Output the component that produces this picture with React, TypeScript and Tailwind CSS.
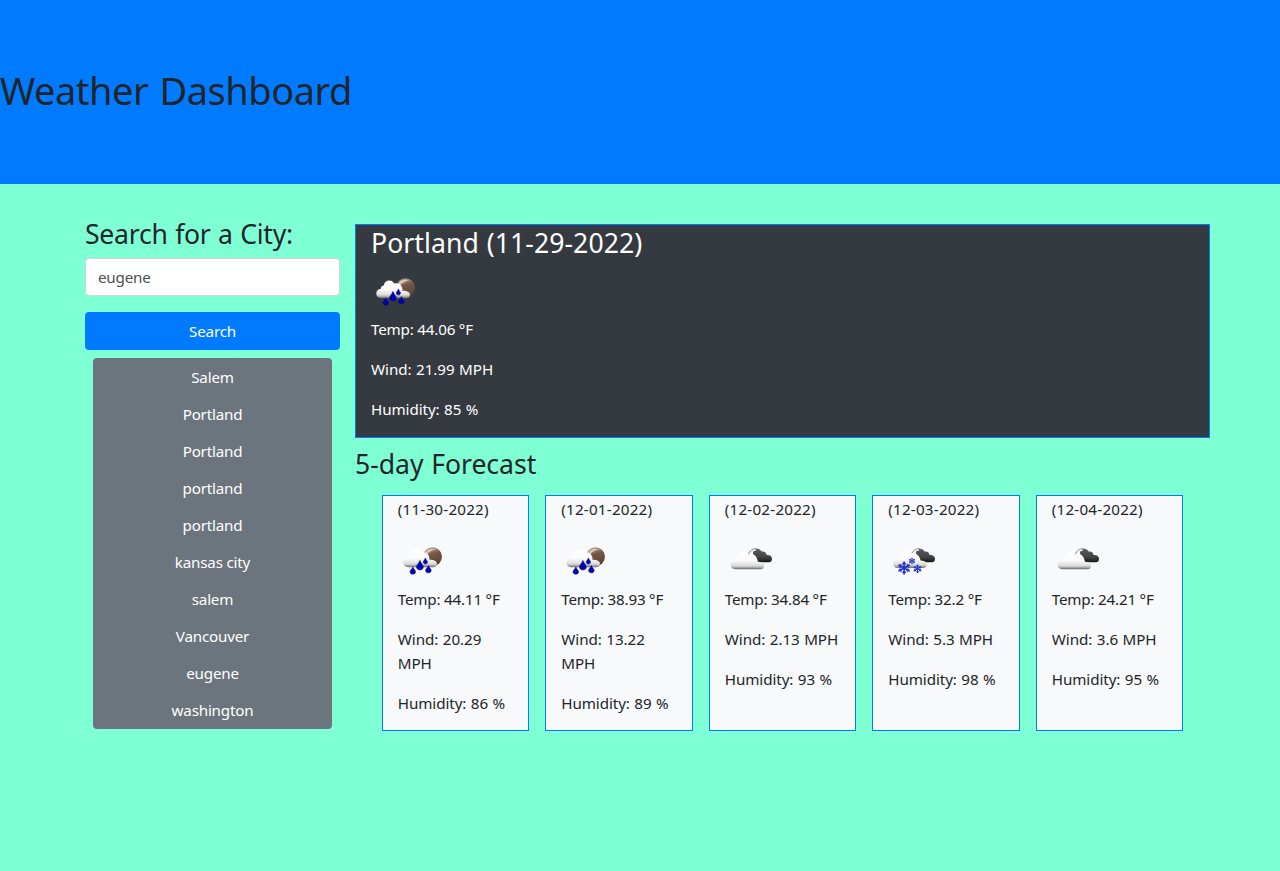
import React, { useId } from "react";

type Kind = "rain" | "clouds" | "snow";

const CLOUD =
  "M10 32.5C7 32.5 5 30.5 5 27.8C5 25.2 6.8 23.3 9.6 22.9C9.2 21.2 10.8 19.6 12.6 19.4C13 16.4 15.2 14.8 18 14.8C20.2 14.8 21.8 15.9 22.8 17.8C26 16.6 29.6 18.2 30.8 21.6C31.3 23 31.4 24.2 31.2 25.2C33 24.6 36.4 25.2 38 27C39.6 29.4 38 32.5 35 32.5Z";

const DARK_CLOUD =
  "M28 18C27.6 14.6 30 12.6 33 13C34.6 13.2 36 14.2 36.6 15.6C39 14.8 41.4 16.4 41.6 19C44.6 18.6 47 20 47 22.8C47 25 46 26.2 44 26.2H33C32.4 22.6 31 19.6 28 18Z";

function Drop({ x, y, h, w }: { x: number; y: number; h: number; w: number }) {
  return (
    <path
      d={`M${x} ${y}C${x + w * 0.2} ${y + h * 0.35} ${x + w / 2} ${y + h * 0.48} ${x + w / 2} ${y + h * 0.68}C${x + w / 2} ${y + h * 1.1} ${x - w / 2} ${y + h * 1.1} ${x - w / 2} ${y + h * 0.68}C${x - w / 2} ${y + h * 0.48} ${x - w * 0.2} ${y + h * 0.35} ${x} ${y}Z`}
      fill="#0000b4"
      stroke="#00006e"
      strokeWidth="0.5"
    />
  );
}

function Flake({ x, y, r }: { x: number; y: number; r: number }) {
  return (
    <g transform={`translate(${x} ${y}) scale(${r / 6})`} stroke="#2733c8" strokeWidth="1.5" fill="none">
      {[0, 60, 120, 180, 240, 300].map((a) => (
        <path key={a} transform={`rotate(${a})`} d="M0 0V-6.2M-1.4 -4.8L0 -3L1.4 -4.8" />
      ))}
    </g>
  );
}

function WeatherIcon({ kind }: { kind: Kind }) {
  const id = useId();
  return (
    <svg viewBox="0 0 50 50" className="block size-[50px]" aria-hidden="true">
      <defs>
        <linearGradient id={`${id}w`} x1="0" y1="0" x2="0" y2="1">
          <stop offset="0" stopColor="#ffffff" />
          <stop offset="0.5" stopColor="#fbfbfb" />
          <stop offset="0.8" stopColor="#dcdcdc" />
          <stop offset="0.88" stopColor="#b8b8b8" />
          <stop offset="1" stopColor="#666666" />
        </linearGradient>
        <linearGradient id={`${id}m`} x1="0" y1="0" x2="0.3" y2="1">
          <stop offset="0" stopColor="#b79a86" />
          <stop offset="0.25" stopColor="#a58a78" />
          <stop offset="0.45" stopColor="#75594a" />
          <stop offset="1" stopColor="#5c4334" />
        </linearGradient>
        <linearGradient id={`${id}d`} x1="0" y1="0" x2="0" y2="1">
          <stop offset="0" stopColor="#5a5a5a" />
          <stop offset="0.6" stopColor="#444444" />
          <stop offset="1" stopColor="#181818" />
        </linearGradient>
      </defs>
      {kind === "rain" ? (
        <>
          <circle cx="34.5" cy="20.7" r="9.5" fill={`url(#${id}m)`} />
          <path d="M26.5 18.5C28 13.5 33 11.6 38 13.2C34.5 14 30 16 28.6 20Z" fill="#e8ddd5" opacity="0.75" />
        </>
      ) : (
        <>
          <path d={DARK_CLOUD} fill={`url(#${id}d)`} />
          <path d="M23.4 19C24.4 14.8 28 11.8 32.6 13" fill="none" stroke="#777777" strokeWidth="0.9" />
          <path d="M25 19C26 15.8 28.6 14 31 14.2" fill="none" stroke="#f1f1f1" strokeWidth="1.1" />
        </>
      )}
      <path
        d={CLOUD}
        fill={`url(#${id}w)`}
        transform={kind === "clouds" ? "translate(0.5 0.7)" : kind === "rain" ? "translate(0.3 -1.2)" : "translate(0.2 -0.4)"}
      />
      {kind === "rain" && (
        <>
          <Drop x={21.9} y={24.4} h={9.6} w={6.8} />
          <Drop x={27.4} y={21.9} h={6.2} w={4.2} />
          <Drop x={14.8} y={31} h={7.2} w={5.6} />
          <Drop x={30.4} y={29.5} h={7.4} w={5.6} />
        </>
      )}
      {kind === "snow" && (
        <>
          <Flake x={16.1} y={32} r={6.3} />
          <Flake x={24} y={25} r={3.3} />
          <Flake x={29.5} y={32.8} r={4.2} />
        </>
      )}
    </svg>
  );
}

const history = ["Salem", "Portland", "Portland", "portland", "portland", "kansas city", "salem", "Vancouver", "eugene", "washington"];

const forecast: { date: string; kind: Kind; temp: string; wind: string; humidity: string }[] = [
  { date: "11-30-2022", kind: "rain", temp: "44.11", wind: "20.29", humidity: "86" },
  { date: "12-01-2022", kind: "rain", temp: "38.93", wind: "13.22", humidity: "89" },
  { date: "12-02-2022", kind: "clouds", temp: "34.84", wind: "2.13", humidity: "93" },
  { date: "12-03-2022", kind: "snow", temp: "32.2", wind: "5.3", humidity: "98" },
  { date: "12-04-2022", kind: "clouds", temp: "24.21", wind: "3.6", humidity: "95" },
];

function Readings({ temp, wind, humidity }: { temp: string; wind: string; humidity: string }) {
  return (
    <>
      <p className="mb-4">{`Temp: ${temp} °F`}</p>
      <p className="mb-4 tracking-[-0.06px] [word-spacing:0.6px]">{`Wind: ${wind} MPH`}</p>
      <p className="mb-4 tracking-[-0.08px] [word-spacing:0.6px]">{`Humidity: ${humidity} %`}</p>
    </>
  );
}

export default function App() {
  return (
    <div className="min-h-screen bg-[#7fffd4] font-['Noto_Sans',sans-serif] text-[15.2px] leading-6 tracking-[-0.2px] text-[#212529]">
      <header className="flex h-[184px] items-center bg-[#007bff] pb-1">
        <h1 className="text-[38px] leading-[48px] tracking-[-0.5px] [word-spacing:2px]">Weather Dashboard</h1>
      </header>
      <main className="mx-auto flex w-[1140px] pt-8">
        <aside className="w-[285px] px-[15px]">
          <h3 className="mb-1.5 pt-0.5 text-[26.6px] leading-[33.6px] tracking-[-0.25px] [word-spacing:0.8px]">Search for a City:</h3>
          <input
            type="text"
            defaultValue="eugene"
            aria-label="City"
            className="mb-4 block h-[38px] w-full rounded border border-[#ced4da] bg-white px-3 tracking-[-0.2px] text-[#495057] outline-none"
          />
          <button className="block h-[38px] w-full rounded bg-[#007bff] text-white">Search</button>
          <div className="m-2 flex h-[371px] flex-col overflow-hidden rounded bg-[#6c757d]">
            {history.map((city, i) => (
              <button key={i} className="h-[37px] pt-px text-white">
                {city}
              </button>
            ))}
          </div>
        </aside>
        <div className="w-[855px]">
          <section className="my-2 border border-[#007bff] bg-[#343a40] px-[15px] text-white">
            <h3 className="mb-1.5 pt-0.5 text-[26.6px] leading-[33.6px] tracking-[0.07px] [word-spacing:0.8px]">Portland (11-29-2022)</h3>
            <WeatherIcon kind="rain" />
            <Readings temp="44.06" wind="21.99" humidity="85" />
          </section>
          <h3 className="mb-1.5 pt-0.5 text-[26.6px] leading-[33.6px] tracking-[-0.03px] [word-spacing:0.8px]">5-day Forecast</h3>
          <section className="flex justify-center gap-4 pt-2">
            {forecast.map((day) => (
              <article key={day.date} className="h-[236px] w-[147.5px] border border-[#007bff] bg-[#f8f9fa] px-[15px] pt-[0.6px]">
                <p className="mb-[15.4px] tracking-[0.22px]">{`(${day.date})`}</p>
                <div className="mb-[0.6px]">
                  <WeatherIcon kind={day.kind} />
                </div>
                <Readings temp={day.temp} wind={day.wind} humidity={day.humidity} />
              </article>
            ))}
          </section>
        </div>
      </main>
    </div>
  );
}
